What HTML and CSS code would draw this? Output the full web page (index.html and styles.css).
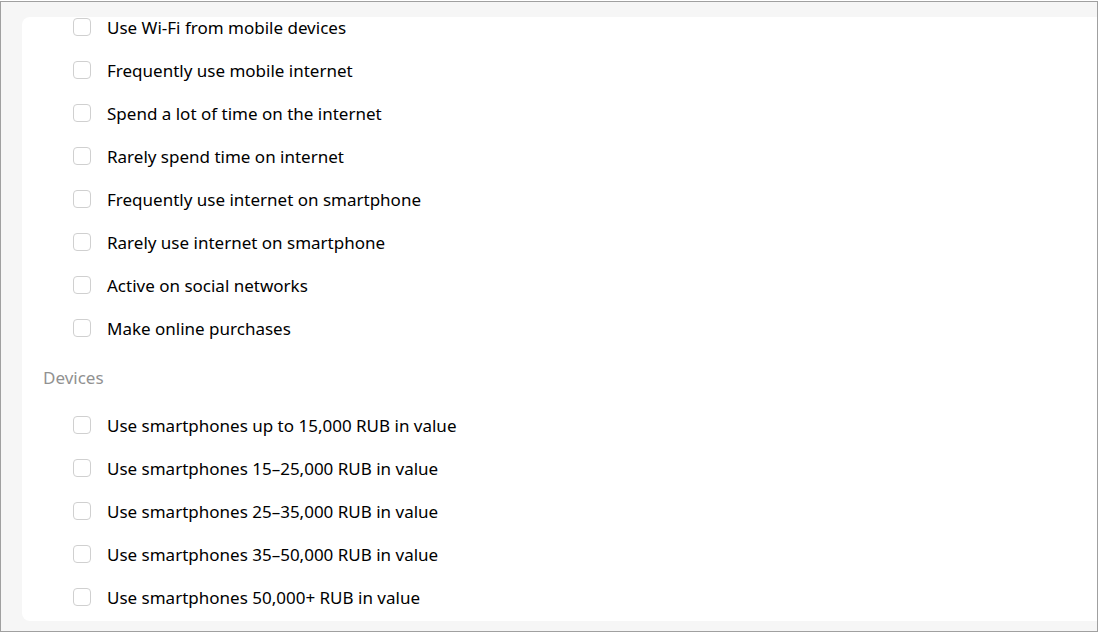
FILE: index.html
```html
<!DOCTYPE html>
<html>
<head>
<meta charset="utf-8">
<link rel="stylesheet" href="styles.css">
</head>
<body>
<div class="frame">
  <div class="card">
    <ul class="list">
      <li class="row"><span class="box"></span><span class="label">Use Wi-Fi from mobile devices</span></li>
      <li class="row"><span class="box"></span><span class="label">Frequently use mobile internet</span></li>
      <li class="row"><span class="box"></span><span class="label">Spend a lot of time on the internet</span></li>
      <li class="row"><span class="box"></span><span class="label">Rarely spend time on internet</span></li>
      <li class="row"><span class="box"></span><span class="label">Frequently use internet on smartphone</span></li>
      <li class="row"><span class="box"></span><span class="label">Rarely use internet on smartphone</span></li>
      <li class="row"><span class="box"></span><span class="label">Active on social networks</span></li>
      <li class="row"><span class="box"></span><span class="label">Make online purchases</span></li>
    </ul>
    <div class="section">Devices</div>
    <ul class="list">
      <li class="row"><span class="box"></span><span class="label">Use smartphones up to 15,000 RUB in value</span></li>
      <li class="row"><span class="box"></span><span class="label">Use smartphones 15–25,000 RUB in value</span></li>
      <li class="row"><span class="box"></span><span class="label">Use smartphones 25–35,000 RUB in value</span></li>
      <li class="row"><span class="box"></span><span class="label">Use smartphones 35–50,000 RUB in value</span></li>
      <li class="row"><span class="box"></span><span class="label">Use smartphones 50,000+ RUB in value</span></li>
    </ul>
  </div>
</div>
</body>
</html>
```

FILE: styles.css
```css
html, body {
  margin: 0;
  padding: 0;
  background: #ffffff;
}
body {
  width: 1098px;
  height: 633px;
  overflow: hidden;
  font-family: "Noto Sans", "Open Sans", sans-serif;
  font-size: 17px;
  color: #000;
}
.frame {
  box-sizing: border-box;
  margin-top: 1px;
  height: 631px;
  border: 1px solid #a0a0a0;
  background: #f6f6f6;
  padding: 15px 0 10px 21px;
}
.card {
  background: #ffffff;
  border-radius: 8px 0 0 8px;
  height: 100%;
  box-sizing: border-box;
  padding: 0 0 14px 0;
}
.list {
  list-style: none;
  margin: 0;
  padding: 0 0 0 51px;
  display: flex;
  flex-direction: column;
  gap: 23px;
}
.row {
  display: flex;
  align-items: center;
  height: 20px;
  gap: 16px;
}
.box {
  box-sizing: border-box;
  width: 18px;
  height: 18px;
  border: 1px solid #d0d0d0;
  border-radius: 4px;
  background: #fff;
  flex: none;
}
.label {
  line-height: 20px;
  white-space: nowrap;
  position: relative;
  top: 1px;
}
.section {
  margin: 30px 0 27px 21px;
  line-height: 20px;
  font-size: 17px;
  color: #919191;
}
```
